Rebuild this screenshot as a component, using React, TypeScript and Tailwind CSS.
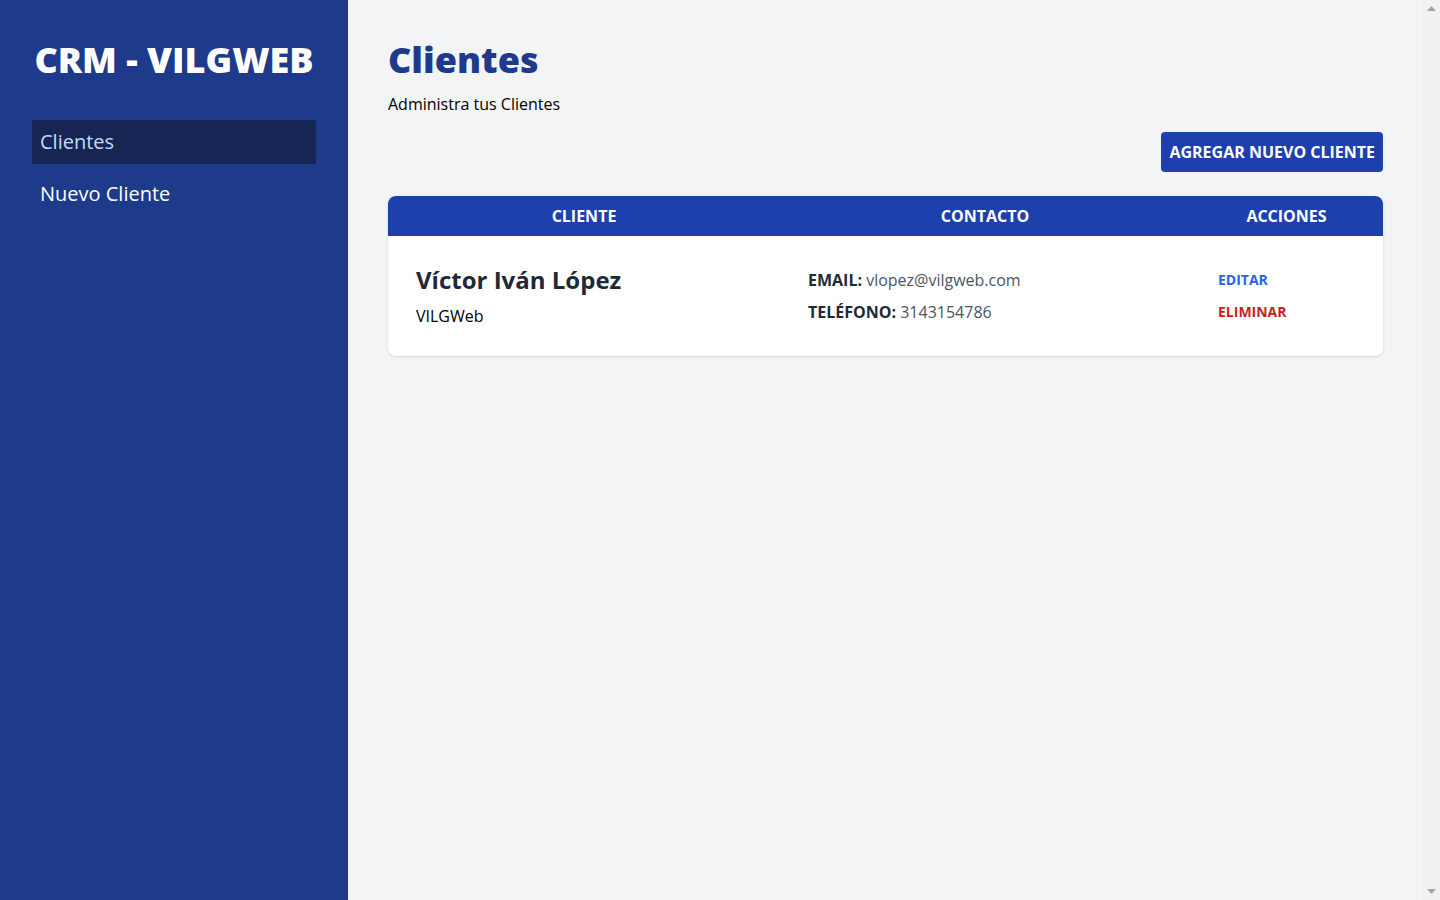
const clientes = [
  {
    id: 1,
    nombre: "Víctor Iván López",
    empresa: "VILGWeb",
    email: "vlopez@vilgweb.com",
    telefono: "3143154786",
  },
]

// classic browser scrollbar strip seen at the right edge of the window
function ScrollbarStrip() {
  return (
    <div className="flex w-[17px] shrink-0 flex-col items-center justify-between bg-[#f1f1f1] py-[6px]">
      <svg width="9" height="5" viewBox="0 0 9 5" aria-hidden="true">
        <path d="M4.5 0L9 5H0z" fill="#a3a3a3" />
      </svg>
      <svg width="9" height="5" viewBox="0 0 9 5" aria-hidden="true">
        <path d="M0 0h9L4.5 5z" fill="#a3a3a3" />
      </svg>
    </div>
  )
}

export default function App() {
  return (
    <div className="flex h-screen bg-[#f3f4f6] font-['Open_Sans',sans-serif] text-black">
      <aside className="w-[348px] shrink-0 bg-[#1e3a8a] px-8 py-10">
        <h2 className="text-center text-4xl font-black text-white">CRM - VILGWEB</h2>
        <nav className="mt-10 flex flex-col gap-2">
          <a href="#" className="block bg-[#172554] px-2 py-2 text-xl text-[#bfdbfe]">
            Clientes
          </a>
          <a href="#" className="block px-2 py-2 text-xl text-white">
            Nuevo Cliente
          </a>
        </nav>
      </aside>

      <main className="min-w-0 flex-1 overflow-y-auto p-10">
        <h1 className="text-4xl font-black text-[#1e3a8a]">Clientes</h1>
        <p className="mt-3">Administra tus Clientes</p>

        <div className="mt-4 flex justify-end">
          <button
            type="button"
            className="rounded bg-[#1e40af] px-2 py-2 font-bold uppercase text-white"
          >
            Agregar Nuevo Cliente
          </button>
        </div>

        <div className="mt-6 overflow-hidden rounded-lg bg-white shadow">
          <table className="w-full table-auto">
            <thead className="bg-[#1e40af] text-white">
              <tr>
                <th className="w-[392px] p-2 uppercase">Cliente</th>
                <th className="w-[410px] p-2 uppercase">Contacto</th>
                <th className="p-2 uppercase">Acciones</th>
              </tr>
            </thead>
            <tbody>
              {clientes.map((cliente) => (
                <tr key={cliente.id}>
                  <td className="space-y-2 p-7">
                    <p className="text-2xl font-bold text-[#1f2937]">{cliente.nombre}</p>
                    <p>{cliente.empresa}</p>
                  </td>
                  <td className="space-y-2 p-7">
                    <p className="text-[#4b5563]">
                      <span className="font-bold uppercase text-[#1f2937]">Email: </span>
                      {cliente.email}
                    </p>
                    <p className="text-[#4b5563]">
                      <span className="font-bold uppercase text-[#1f2937]">Teléfono: </span>
                      {cliente.telefono}
                    </p>
                  </td>
                  <td className="space-y-2 p-7">
                    <button
                      type="button"
                      className="block text-sm leading-6 font-bold uppercase text-[#2563eb]"
                    >
                      Editar
                    </button>
                    <button
                      type="button"
                      className="block text-sm leading-6 font-bold uppercase text-[#c81e1e]"
                    >
                      Eliminar
                    </button>
                  </td>
                </tr>
              ))}
            </tbody>
          </table>
        </div>
      </main>

      <ScrollbarStrip />
    </div>
  )
}
